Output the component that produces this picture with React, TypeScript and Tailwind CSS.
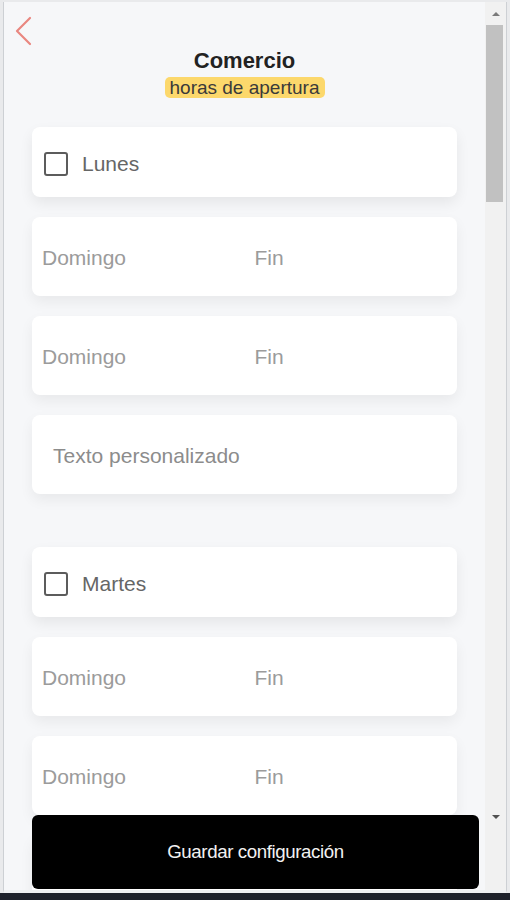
const days = ['Lunes', 'Martes', 'Miércoles', 'Jueves', 'Viernes', 'Sábado', 'Domingo']

const TimeRow = () => (
  <div className="h-[79px] rounded-lg bg-white shadow-[0_6px_14px_rgba(0,0,0,0.06)] grid grid-cols-2 items-center pt-[2px]">
    <span className="pl-[10px] text-[21px] text-[#9b9b9b]">Domingo</span>
    <span className="pl-[10px] text-[21px] text-[#9b9b9b]">Fin</span>
  </div>
)

const DayGroup = ({ day }: { day: string }) => (
  <div className="flex flex-col gap-5">
    <div className="h-[70px] rounded-lg bg-white shadow-[0_6px_14px_rgba(0,0,0,0.07)] flex items-center pl-[12px] pt-[3px] gap-[14px]">
      <span className="w-[24px] h-[24px] rounded-[3px] border-2 border-[#5c5c5c] bg-white" />
      <span className="text-[21px] text-[#666666]">{day}</span>
    </div>
    <TimeRow />
    <TimeRow />
    <div className="h-[79px] rounded-lg bg-white shadow-[0_6px_14px_rgba(0,0,0,0.06)] flex items-center pl-[21px] pt-[2px]">
      <span className="text-[21px] text-[#8c8c8c]">Texto personalizado</span>
    </div>
  </div>
)

export default function App() {
  return (
    <div className="h-screen w-full flex flex-col bg-[#e9eaec] pt-[2px] font-['Liberation_Sans',Arial,sans-serif]">
      <div className="relative flex-1 min-h-0 flex ml-[3px] mr-[3px] border-l border-r border-[#cdd0d4] border-b-[3px] border-b-[#eef0f2] bg-[#f6f7f9]">
        {/* content */}
        <div className="flex-1 min-w-0 overflow-hidden">
          <div className="pt-[14px] pl-[10px]">
            <svg width="20" height="30" viewBox="0 0 20 30" fill="none">
              <path d="M16 2 L3 15 L16 28" stroke="#e98780" strokeWidth="2.2" strokeLinecap="round" strokeLinejoin="round" />
            </svg>
          </div>
          <div className="flex flex-col items-center">
            <h1 className="mt-[2px] text-[22px] leading-[26px] font-bold text-[#222222]">Comercio</h1>
            <span className="mt-[3px] inline-block px-[5px] rounded-[5px] bg-[#fcd86c] text-[19px] leading-[21px] text-[#3a3a3a]">
              horas de apertura
            </span>
          </div>
          <div className="mx-[28px] mt-[29px] flex flex-col gap-[53px] pb-[120px]">
            {days.map((d) => (
              <DayGroup key={d} day={d} />
            ))}
          </div>
        </div>

        {/* scrollbar */}
        <div className="w-[21px] shrink-0 bg-[#f1f1f1] flex flex-col items-center">
          <div className="h-[23px] w-full flex items-center justify-center">
            <span className="w-0 h-0 border-l-[4px] border-r-[4px] border-b-[4px] border-l-transparent border-r-transparent border-b-[#7a7a7a]" />
          </div>
          <div className="ml-[-3px] w-[17px] h-[177px] bg-[#c1c1c1]" />
          <div className="flex-1" />
          <div className="h-[22px] w-full flex items-start justify-center pt-[7px] mb-[60px]">
            <span className="w-0 h-0 border-l-[4px] border-r-[4px] border-t-[4px] border-l-transparent border-r-transparent border-t-[#505050]" />
          </div>
        </div>

        {/* fixed save button */}
        <button className="absolute left-[28px] bottom-[1px] w-[447px] h-[74px] rounded-[6px] bg-black text-[#f2f2f2] text-[18.7px] tracking-[-0.4px]">
          Guardar configuración
        </button>
      </div>
      <div className="h-[7px] bg-[#1d212b]" />
    </div>
  )
}
